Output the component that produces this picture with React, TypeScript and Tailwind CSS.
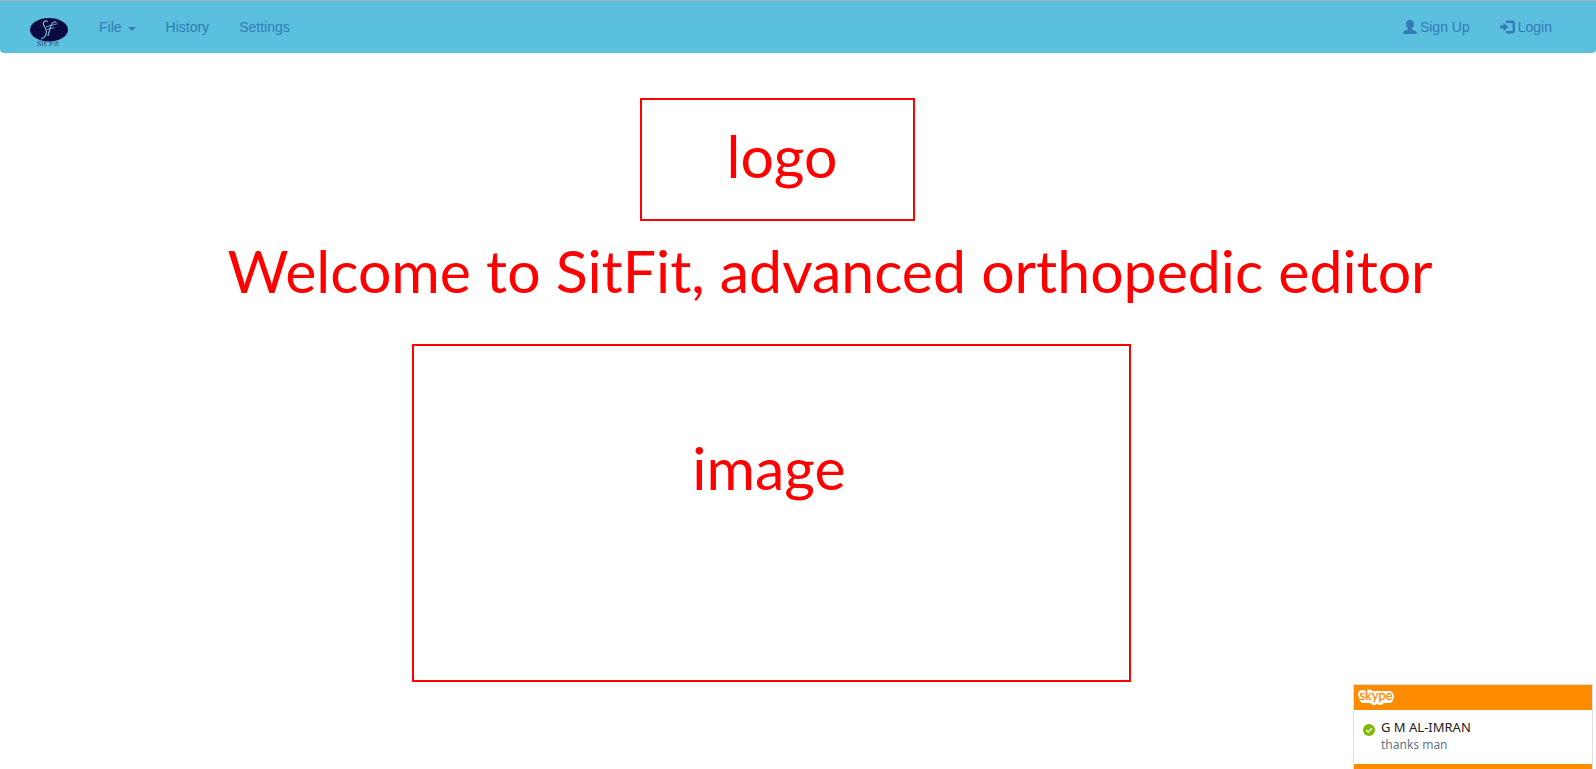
import type { ReactNode } from "react";

function BrandLogo() {
  return (
    <svg viewBox="0 0 40 30" className="h-[30px] w-10" role="img" aria-label="Sit Fit">
      <ellipse cx="20" cy="12.800" rx="19" ry="11.700" fill="#0a0a40" />
      <g fill="none" stroke="#76b5d2" strokeLinecap="round">
        <path d="M18.500 4.200C16 3.300 13.800 5 14.500 7.500C15.200 10 17.600 12 17.400 15C17.200 18.500 15 21 12.500 21.800" strokeWidth="1.200" />
        <path d="M27 5C24.300 4.300 22.600 6.500 21.300 10.500L19 18.500" strokeWidth="1.200" />
        <path d="M17.500 9.800C21 8.200 24.500 8.200 28 6.800M18.500 12.500C21 11.300 23 11.300 25 10.800" strokeWidth="0.900" />
      </g>
      <text x="18.800" y="29" textAnchor="middle" fontFamily="DejaVu Serif, serif" fontSize="7" fill="#26397a">
        Sit Fit
      </text>
    </svg>
  );
}

function UserIcon() {
  return (
    <svg viewBox="0 0 14 14" className="size-3.5" fill="currentColor" aria-hidden="true">
      <path d="M7 0C9.400 0 11 1.500 11 4C11 5.800 10.300 7.300 9 8.400V9.300C9.300 10 13.300 10.800 13.800 12.300V14H0.200V12.300C0.700 10.800 4.700 10 5 9.300V8.400C3.700 7.300 3 5.800 3 4C3 1.500 4.600 0 7 0Z" />
    </svg>
  );
}

function LoginIcon() {
  return (
    <svg viewBox="0 0 15 14" className="h-3.5 w-[15px]" fill="currentColor" aria-hidden="true">
      <path d="M0 5.500H3.500V2.800L8.300 7L3.500 11.200V8.500H0Z" />
      <path d="M6 1.800H12.300Q13.800 1.800 13.800 3.300V10.700Q13.800 12.200 12.300 12.200H6" fill="none" stroke="currentColor" strokeWidth="2.400" />
    </svg>
  );
}

function SkypeLogo() {
  return (
    <svg viewBox="0 0 38 18" className="h-[18px] w-[38px] overflow-visible" role="img" aria-label="Skype">
      <g fill="#fff">
        <circle cx="4.500" cy="5.500" r="4.500" />
        <circle cx="11" cy="5" r="4.500" />
        <circle cx="31" cy="7.500" r="5" />
        <circle cx="6" cy="9.500" r="4.500" />
        <circle cx="16" cy="11.500" r="4.500" />
        <circle cx="22" cy="11.500" r="4.500" />
        <rect x="2" y="2" width="33" height="12" rx="4" />
      </g>
      <text x="18" y="11" textAnchor="middle" fontFamily="Lato, sans-serif" fontSize="13" fill="#ff8c00" stroke="#ff8c00" strokeWidth="0.300">
        skype
      </text>
    </svg>
  );
}

function NavLink({ children }: { children: ReactNode }) {
  return (
    <a href="#" className="flex items-center gap-[3px] px-[15px] py-4 leading-5">
      {children}
    </a>
  );
}

export default function App() {
  return (
    <div className="min-h-screen bg-white font-['Liberation_Sans',Arial,sans-serif]">
      <nav className="flex justify-between rounded-b-sm border-t border-[#b0b0b0] bg-[#5bc0de] px-[29px] text-sm text-[#337ab7]">
        <div className="flex">
          <a href="#" className="mr-[15px] pt-4">
            <BrandLogo />
          </a>
          <button type="button" className="flex items-center gap-1.5 px-[15px] py-4 leading-5">
            File
            <svg viewBox="0 0 8 4" className="mt-1 h-1 w-2" fill="currentColor" aria-hidden="true">
              <path d="M0 0H8L4 4Z" />
            </svg>
          </button>
          <NavLink>History</NavLink>
          <NavLink>Settings</NavLink>
        </div>
        <div className="flex">
          <NavLink>
            <UserIcon />
            Sign Up
          </NavLink>
          <NavLink>
            <LoginIcon />
            Login
          </NavLink>
        </div>
      </nav>

      <main className="flex flex-col items-center pt-[45px] font-['Lato',sans-serif] text-[59px] leading-[72px] text-[#ff0000]">
        <div className="mr-[42px] flex h-[123px] w-[275px] justify-center border-2 border-[#ff0000] pt-5 pl-2.5">
          logo
        </div>
        <h1 className="mt-3.5 pl-16 text-center">Welcome to SitFit, advanced orthopedic editor</h1>
        <div className="mt-[37px] mr-[54px] flex h-[338px] w-full max-w-[719px] justify-center border-2 border-[#ff0000] pt-[86px] pr-1">
          image
        </div>
      </main>

      <aside className="fixed right-[3px] bottom-0 w-60 border-x border-t border-[#dedede] bg-white font-['Noto_Sans',sans-serif]">
        <div className="flex h-[25px] bg-[#ff8c00] pt-1 pl-1">
          <SkypeLogo />
        </div>
        <div className="flex h-[54px] gap-1.5 pt-2 pl-[9px]">
          <svg viewBox="0 0 12 12" className="mt-1.5 size-3" role="img" aria-label="Online">
            <circle cx="6" cy="6" r="6" fill="#7fba00" />
            <path d="M3.300 6L5.300 8L8.800 4.300" fill="none" stroke="#fff" strokeWidth="1.500" />
          </svg>
          <div>
            <p className="text-[13px] leading-[18px] text-[#222]">G M AL-IMRAN</p>
            <p className="text-xs leading-[18px] text-[#66758a]">thanks man</p>
          </div>
        </div>
        <div className="h-[5px] bg-[#ff8c00]" />
      </aside>
    </div>
  );
}
